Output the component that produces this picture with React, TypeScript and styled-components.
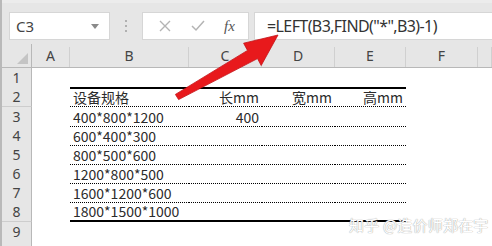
import React from "react";
import styled, { createGlobalStyle } from "styled-components";

const Global = createGlobalStyle`
  html, body { margin: 0; padding: 0; background: #fff; }
  body { width: 492px; height: 246px; overflow: hidden; }
`;

const Page = styled.div`
  position: relative;
  width: 492px;
  height: 246px;
  overflow: hidden;
  background: #fff;
  border-left: 2px solid #b9b9b9;
  box-sizing: border-box;
  font-family: "Noto Sans CJK SC", "Noto Sans", sans-serif;
`;

const Toolbar = styled.div`
  height: 44px;
  box-sizing: border-box;
  background: #e6e6e6;
  border-top: 3px solid #ececec;
  padding: 9px 0 0 7px;
  display: flex;
  align-items: flex-start;
`;

const NameBox = styled.div`
  width: 101px;
  height: 28px;
  box-sizing: border-box;
  background: #fff;
  border: 1px solid #d6d6d6;
  display: flex;
  align-items: center;
  justify-content: space-between;
  padding: 0 10px 0 6px;
  font-family: "Noto Sans", sans-serif;
  font-size: 15px;
  color: #444;
`;

const Caret = styled.span`
  width: 0;
  height: 0;
  border-left: 4px solid transparent;
  border-right: 4px solid transparent;
  border-top: 5px solid #8a8a8a;
`;

const Grip = styled.div`
  width: 32px;
  height: 28px;
  display: flex;
  flex-direction: column;
  align-items: center;
  justify-content: center;
  gap: 3px;
  & > i { width: 2px; height: 2px; background: #b0b0b0; display: block; }
`;

const FxBox = styled.div`
  width: 107px;
  height: 28px;
  box-sizing: border-box;
  background: #fff;
  border: 1px solid #d6d6d6;
  display: flex;
  align-items: center;
  justify-content: space-around;
  padding: 0 4px 0 6px;
`;

const FxLabel = styled.span`
  font-family: "Liberation Serif", serif;
  font-style: italic;
  font-size: 15px;
  color: #555;
`;

const Formula = styled.div`
  flex: 1;
  margin-left: 5px;
  height: 28px;
  box-sizing: border-box;
  background: #fff;
  border: 1px solid #d6d6d6;
  border-right: none;
  display: flex;
  align-items: center;
  padding-left: 12px;
  font-family: "Noto Sans", sans-serif;
  font-size: 16px;
  letter-spacing: -0.6px;
  color: #333;
`;

const COLS = "30px 38px 119px 73px 73px 71px 72px 1fr";

const HeaderRow = styled.div`
  display: grid;
  grid-template-columns: ${COLS};
  height: 24px;
  background: #e6e6e6;
  border-bottom: 1px solid #b8b8b8;
  box-sizing: border-box;
`;

const ColHead = styled.div`
  display: flex;
  align-items: flex-end;
  justify-content: center;
  padding-bottom: 2px;
  font-family: "Noto Sans", sans-serif;
  font-size: 14px;
  color: #444;
  border-right: 1px solid #d0d0d0;
  margin-top: 3px;
  line-height: 18px;
`;

const Corner = styled.div`
  position: relative;
  border-right: 1px solid #b8b8b8;
  &::after {
    content: "";
    position: absolute;
    right: 3px;
    bottom: 3px;
    width: 0;
    height: 0;
    border-left: 11px solid transparent;
    border-bottom: 11px solid #c4c4c4;
  }
`;

const Row = styled.div<{ $h: number }>`
  display: grid;
  grid-template-columns: ${COLS};
  height: ${(p) => p.$h}px;
`;

const RowHead = styled.div`
  background: #e6e6e6;
  border-right: 1px solid #b8b8b8;
  border-bottom: 1px solid #cdcdcd;
  box-sizing: border-box;
  display: flex;
  align-items: center;
  justify-content: center;
  font-family: "Noto Sans", sans-serif;
  font-size: 14px;
  color: #444;
`;

type Edge = "none" | "thickTop" | "dotted" | "thickBottom";

const Cell = styled.div<{ $edge: Edge; $right?: boolean }>`
  box-sizing: border-box;
  display: flex;
  align-items: flex-end;
  justify-content: ${(p) => (p.$right ? "flex-end" : "flex-start")};
  padding: 0 3px 1px 3px;
  font-size: 14px;
  line-height: 16px;
  color: #2b2b2b;
  white-space: nowrap;
  border-top: ${(p) => (p.$edge === "thickTop" ? "2px solid #000" : "none")};
  border-bottom: ${(p) =>
    p.$edge === "thickBottom"
      ? "2px solid #000"
      : p.$edge === "dotted" || p.$edge === "thickTop"
      ? "1px dotted #000"
      : "none"};
`;

const Blank = styled.div``;

const Watermark = styled.div`
  position: absolute;
  left: 347px;
  top: 214px;
  font-size: 15px;
  letter-spacing: 0.2px;
  color: #fff;
  text-shadow: 0 0 1px #a8a8a8, 0 0 1px #b4b4b4;
`;

const ArrowLayer = styled.svg`
  position: absolute;
  left: 0;
  top: 0;
  pointer-events: none;
`;

const rowHeights = [19, 20, 19, 19, 19, 19, 19, 20, 19, 19];

const data: { spec?: string; c?: string; d?: string; e?: string; edge: Edge }[] = [
  { edge: "none" },
  { spec: "设备规格", c: "长mm", d: "宽mm", e: "高mm", edge: "thickTop" },
  { spec: "400*800*1200", c: "400", edge: "dotted" },
  { spec: "600*400*300", edge: "dotted" },
  { spec: "800*500*600", edge: "dotted" },
  { spec: "1200*800*500", edge: "dotted" },
  { spec: "1600*1200*600", edge: "dotted" },
  { spec: "1800*1500*1000", edge: "thickBottom" },
  { edge: "none" },
  { edge: "none" },
];

export default function App() {
  return (
    <>
      <Global />
      <Page>
        <Toolbar>
          <NameBox>
            <span>C3</span>
            <Caret />
          </NameBox>
          <Grip>
            <i />
            <i />
            <i />
          </Grip>
          <FxBox>
            <svg width="14" height="14" viewBox="0 0 14 14">
              <path d="M2 2 L12 12 M12 2 L2 12" stroke="#b4b4b4" strokeWidth="1.4" fill="none" />
            </svg>
            <svg width="16" height="14" viewBox="0 0 16 14">
              <path d="M2 7 L6 11 L14 2" stroke="#b4b4b4" strokeWidth="1.5" fill="none" />
            </svg>
            <FxLabel>fx</FxLabel>
          </FxBox>
          <Formula>=LEFT(B3,FIND("*",B3)-1)</Formula>
        </Toolbar>
        <HeaderRow>
          <Corner />
          {["A", "B", "C", "D", "E", "F", "G"].map((l) => (
            <ColHead key={l}>{l === "G" ? "" : l}</ColHead>
          ))}
        </HeaderRow>
        {data.map((r, i) => (
          <Row key={i} $h={rowHeights[i]}>
            <RowHead>{i < 9 ? i + 1 : ""}</RowHead>
            <Blank />
            <Cell $edge={r.edge}>{r.spec}</Cell>
            <Cell $edge={r.edge} $right>{r.c}</Cell>
            <Cell $edge={r.edge} $right>{r.d}</Cell>
            <Cell $edge={r.edge} $right>{r.e}</Cell>
            <Blank />
            <Blank />
          </Row>
        ))}
        <Watermark>知乎 @造价师郑在宇</Watermark>
        <ArrowLayer width="492" height="246" viewBox="0 0 492 246">
          <polygon
            points="173.4,94.4 245.5,50.4 241.6,43.2 276,35 259.2,65.5 255.5,58.6 176.6,99.6"
            fill="#e8191c"
            stroke="#c41216"
            strokeWidth="0.8"
            strokeLinejoin="round"
          />
        </ArrowLayer>
      </Page>
    </>
  );
}
